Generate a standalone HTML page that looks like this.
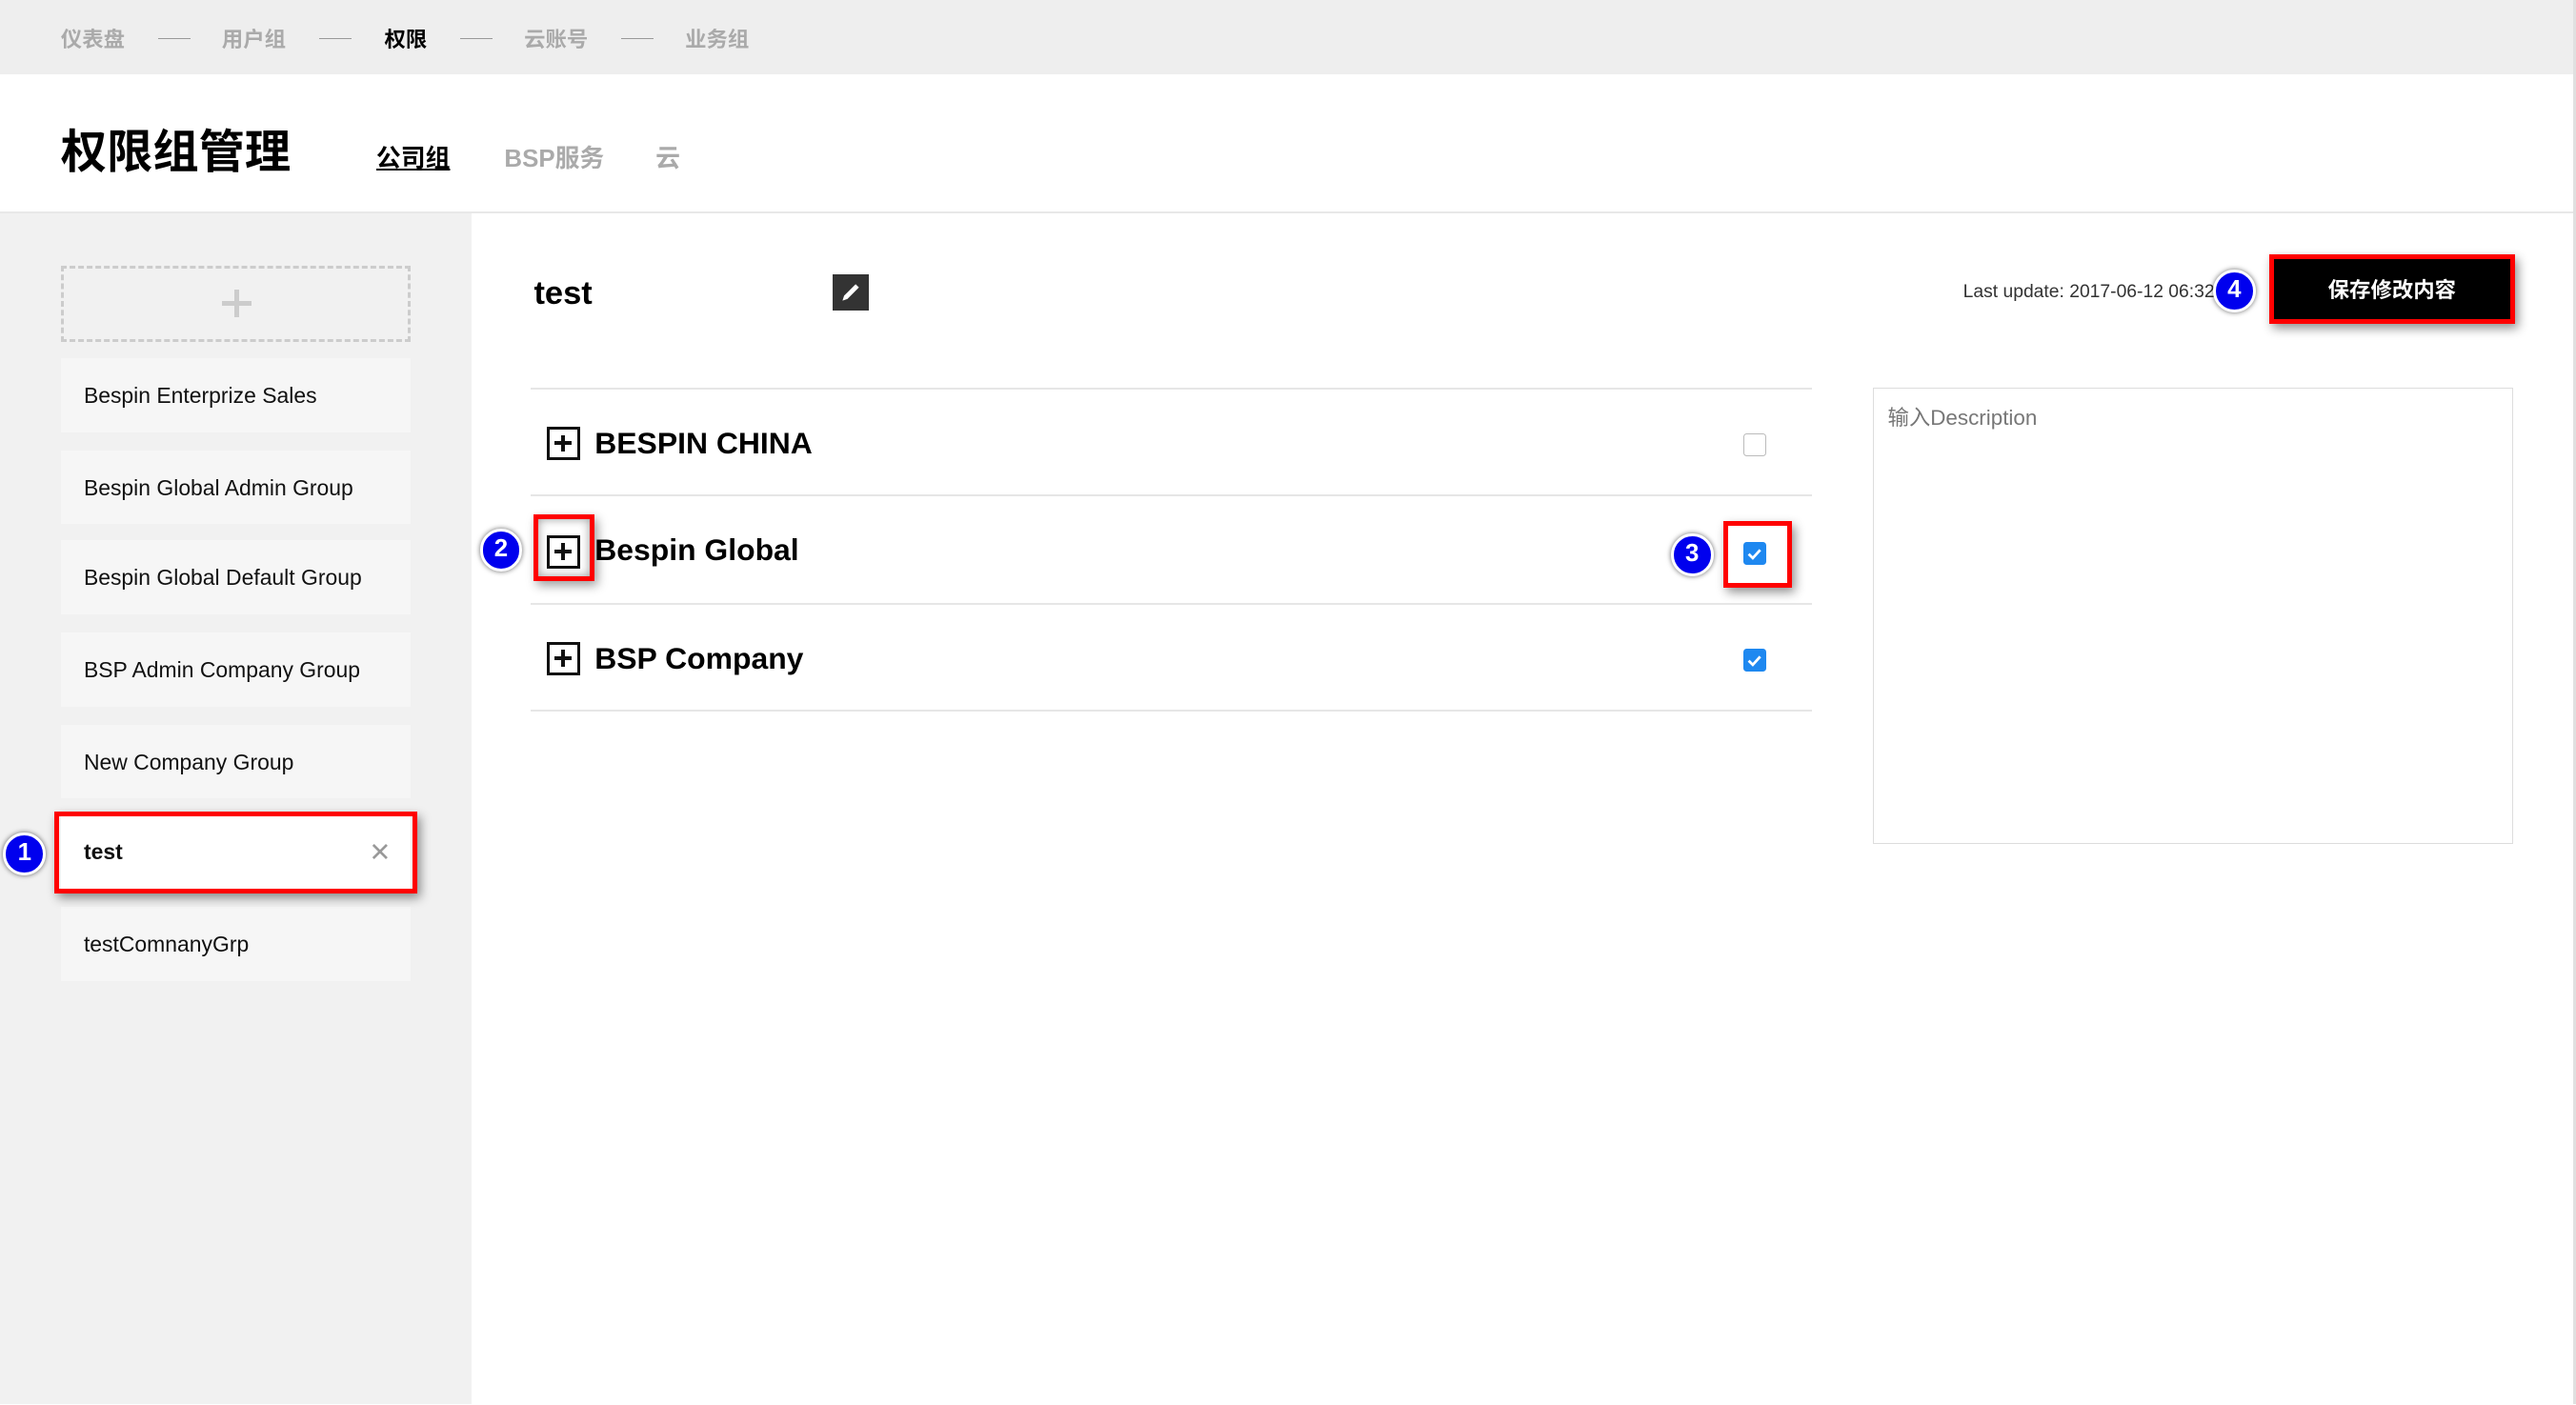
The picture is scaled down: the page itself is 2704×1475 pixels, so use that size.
<!DOCTYPE html>
<html><head><meta charset="utf-8"><style>
*{margin:0;padding:0;box-sizing:border-box}
html,body{width:2704px;height:1475px;overflow:hidden;background:#fff}
#w{zoom:1.72449;width:1568px;height:855px;position:relative;font-family:"Liberation Sans","Noto Sans CJK SC",sans-serif;color:#000}
.a{position:absolute}
.top{left:0;top:0;width:1568px;height:45px;background:#eee}
.bc{top:14px;font-size:13px;font-weight:bold;color:#aaa;line-height:18px}
.dash{top:23px;width:20px;height:1px;background:#999}
.side{left:0;top:130px;width:287px;height:725px;background:#f1f1f1}
.item{left:37px;width:213px;height:45px;background:#f6f6f6;font-size:13.3px;line-height:46px;padding-left:14px;color:#111}
.red{border:3px solid #f00;box-shadow:2px 3px 6px rgba(0,0,0,.45)}
.badge{width:26px;height:26px;border-radius:50%;background:#0000ee;border:2px solid #fff;box-shadow:0 0 3px rgba(0,0,0,.6);color:#fff;font-weight:bold;font-size:15px;text-align:center;line-height:22px}
.hl{left:323px;width:780px;height:1px;background:#e6e6e6}
.pl{left:333px;width:20px;height:20px;border:2px solid #111}
.pl:before{content:"";position:absolute;left:3px;top:7px;width:10px;height:2px;background:#111}
.pl:after{content:"";position:absolute;left:7px;top:3px;width:2px;height:10px;background:#111}
.rt{left:362px;font-size:18.5px;font-weight:bold;line-height:24px}
.cb{left:1061px;width:14px;height:14px;border-radius:2px;background:#1e88f0}
.cb svg{position:absolute;left:2px;top:2px}
</style></head><body><div id="w">
<div class="a top"></div>
<div class="a bc" style="left:37px;top:15px">仪表盘</div><div class="a dash" style="left:96px"></div>
<div class="a bc" style="left:135px;top:15px">用户组</div><div class="a dash" style="left:194px"></div>
<div class="a bc" style="left:234px;top:15px;color:#000">权限</div><div class="a dash" style="left:280px"></div>
<div class="a bc" style="left:319px;top:15px">云账号</div><div class="a dash" style="left:378px"></div>
<div class="a bc" style="left:417px;top:15px">业务组</div>
<div class="a" style="left:37px;top:74px;font-size:28px;font-weight:bold;line-height:38px">权限组管理</div>
<div class="a" style="left:229px;top:87px;font-size:15px;font-weight:bold;text-decoration:underline;line-height:20px">公司组</div>
<div class="a" style="left:307px;top:87px;font-size:15px;font-weight:bold;color:#aaa;line-height:20px">BSP服务</div>
<div class="a" style="left:399px;top:87px;font-size:15px;font-weight:bold;color:#aaa;line-height:20px">云</div>
<div class="a" style="left:0;top:129px;width:1568px;height:1px;background:#e8e8e8"></div>
<div class="a" style="left:1566px;top:0;width:2px;height:855px;background:#e0e0e0"></div>
<div class="a side"></div>
<div class="a" style="left:37px;top:162px;width:213px;height:46px;border:2px dashed #ccc"></div>
<div class="a" style="left:135px;top:183px;width:18px;height:3px;background:#ccc"></div>
<div class="a" style="left:142.5px;top:176px;width:3px;height:17px;background:#ccc"></div>
<div class="a item" style="top:218px">Bespin Enterprize Sales</div>
<div class="a item" style="top:274px">Bespin Global Admin Group</div>
<div class="a item" style="top:329px">Bespin Global Default Group</div>
<div class="a item" style="top:385px">BSP Admin Company Group</div>
<div class="a item" style="top:441px">New Company Group</div>
<div class="a item" style="top:496px;background:#fff;font-weight:bold">test<span style="position:absolute;right:12px;color:#999;font-weight:normal;font-size:16px">✕</span></div>
<div class="a item" style="top:552px">testComnanyGrp</div>
<div class="a red" style="left:33px;top:494px;width:221px;height:50px"></div>
<div class="a badge" style="left:2px;top:507px">1</div>
<div class="a" style="left:325px;top:166px;font-size:20px;font-weight:bold;line-height:26px">test</div>
<div class="a" style="left:507px;top:167px;width:22px;height:22px;background:#333"><svg width="22" height="22"><path d="M6 16l1-3 7-7 2 2-7 7z" fill="#fff"/></svg></div>
<div class="a" style="left:1150px;top:170px;width:198px;text-align:right;font-size:11.2px;color:#333;line-height:16px">Last update: 2017-06-12 06:32</div>
<div class="a badge" style="left:1347px;top:164px">4</div>
<div class="a red" style="left:1381px;top:155px;width:150px;height:42px;background:#000;color:#fff;font-size:13px;font-weight:bold;text-align:center;line-height:38px">保存修改内容</div>
<div class="a hl" style="top:236px"></div><div class="a hl" style="top:301px"></div><div class="a hl" style="top:367px"></div><div class="a hl" style="top:432px"></div>
<div class="a pl" style="top:260px"></div><div class="a rt" style="top:258px">BESPIN CHINA</div>
<div class="a pl" style="top:326px"></div><div class="a rt" style="top:323px">Bespin Global</div>
<div class="a pl" style="top:391px"></div><div class="a rt" style="top:389px">BSP Company</div>
<div class="a" style="left:1061px;top:264px;width:14px;height:14px;border:1px solid #bbb;border-radius:2px"></div>
<div class="a cb" style="top:330px"><svg width="10" height="10"><path d="M1.5 5l2.5 2.5 4.5-5" stroke="#fff" stroke-width="1.6" fill="none"/></svg></div>
<div class="a cb" style="top:395px"><svg width="10" height="10"><path d="M1.5 5l2.5 2.5 4.5-5" stroke="#fff" stroke-width="1.6" fill="none"/></svg></div>
<div class="a red" style="left:325px;top:313px;width:37px;height:41px;box-shadow:inset 0 0 6px rgba(0,0,0,.4),2px 3px 6px rgba(0,0,0,.4)"></div>
<div class="a badge" style="left:292px;top:322px">2</div>
<div class="a red" style="left:1049px;top:317px;width:42px;height:41px"></div>
<div class="a badge" style="left:1017px;top:325px">3</div>
<div class="a" style="left:1140px;top:236px;width:390px;height:278px;border:1px solid #ddd"></div>
<div class="a" style="left:1149px;top:245px;font-size:13px;color:#777;line-height:18px">输入Description</div>
</div></body></html>
